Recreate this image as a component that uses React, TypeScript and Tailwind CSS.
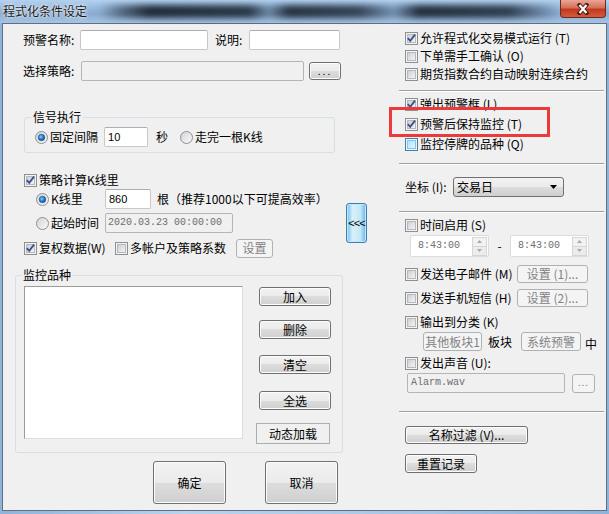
import React from "react";

const btn =
  "flex items-center justify-center whitespace-nowrap rounded-[3px] border border-[#707070] bg-[linear-gradient(#f2f2f2_0%,#ebebeb_50%,#dddddd_50%,#cfcfcf_100%)] shadow-[inset_0_0_0_1px_#fcfcfc]";
const btnOff =
  "flex items-center justify-center whitespace-nowrap rounded-[3px] border border-[#adb2b5] bg-[#f4f4f4] text-[#838383]";
const field = "flex items-center rounded-[2px] border border-[#c6c8cc] border-t-[#abadb3] bg-white";
const fieldOff = "flex items-center rounded-[2px] border border-[#b5b5b5] bg-[#f0f0f0] text-[#6d6d6d]";
const mono = "font-['Liberation_Mono',monospace] text-[10px]";
const sep = "h-0 border-y border-t-[#a0a0a0] border-b-[#ffffff]";

function Check({ on, hot }: { on?: boolean; hot?: boolean }) {
  return (
    <svg width="13" height="13" viewBox="0 0 13 13" className="shrink-0">
      <defs>
        <linearGradient id="cbg" x1="0" y1="0" x2="1" y2="1">
          <stop offset="0" stopColor="#c9cdd3" />
          <stop offset="1" stopColor="#f6f6f6" />
        </linearGradient>
        <linearGradient id="cbh" x1="0" y1="0" x2="1" y2="1">
          <stop offset="0" stopColor="#b1dffd" />
          <stop offset="1" stopColor="#eaf7fe" />
        </linearGradient>
      </defs>
      <rect x="0.5" y="0.5" width="12" height="12" fill="#f4f4f4" stroke={hot ? "#3c7fb1" : "#8e8f8f"} />
      <rect
        x="2.5"
        y="2.5"
        width="8"
        height="8"
        fill={hot ? "url(#cbh)" : "url(#cbg)"}
        stroke={hot ? "#79c6f9" : "#b5b9bf"}
      />
      {on && <path d="M2.8 6.2 L5.2 8.8 L10 2.6" fill="none" stroke="#3d4f8a" strokeWidth="1.8" />}
    </svg>
  );
}

function Radio({ on }: { on?: boolean }) {
  return (
    <svg width="13" height="13" viewBox="0 0 13 13" className="shrink-0">
      <defs>
        <linearGradient id="rbg" x1="0" y1="0" x2="1" y2="1">
          <stop offset="0" stopColor="#d0d4d9" />
          <stop offset="1" stopColor="#fafafa" />
        </linearGradient>
        <radialGradient id="rdot" cx="0.4" cy="0.4" r="0.6">
          <stop offset="0" stopColor="#8fd0f6" />
          <stop offset="0.55" stopColor="#2a7fcf" />
          <stop offset="1" stopColor="#0f4f9a" />
        </radialGradient>
      </defs>
      <circle cx="6.5" cy="6.5" r="6" fill="url(#rbg)" stroke="#8e8f8f" />
      {on && <circle cx="6.5" cy="6.5" r="3.3" fill="url(#rdot)" stroke="#1c5a96" strokeWidth="0.6" />}
    </svg>
  );
}

function Spin() {
  return (
    <div className="flex h-[22px] w-[79px] items-center rounded-[2px] border border-[#dcdcdc] bg-white">
      <span className={"ml-[7px] flex-1 text-[#6d6d6d] " + mono}>8:43:00</span>
      <div className="mr-[1px] flex h-[19px] w-[15px] flex-col">
        <div className="flex flex-1 items-center justify-center border border-[#d6d6d6] bg-[#f2f2f2]">
          <svg width="5" height="3" viewBox="0 0 5 3">
            <path d="M0 3 L2.5 0 L5 3 Z" fill="#a8a8a8" />
          </svg>
        </div>
        <div className="flex flex-1 items-center justify-center border border-t-0 border-[#d6d6d6] bg-[#ececec]">
          <svg width="5" height="3" viewBox="0 0 5 3">
            <path d="M0 0 L2.5 3 L5 0 Z" fill="#a8a8a8" />
          </svg>
        </div>
      </div>
    </div>
  );
}

export default function App() {
  return (
    <div className="flex h-[514px] w-[609px] flex-col overflow-hidden bg-[linear-gradient(90deg,#8fb3d9,#b9d3ec_30%,#a7c5e4_70%,#8fb3d9)] pb-[3px] font-['Noto_Sans_CJK_SC',sans-serif] text-[12px] leading-[14px] text-black">
      {/* title bar */}
      <div className="flex h-[23px] shrink-0 items-start bg-[linear-gradient(#b4d2ef,#93b6da_40%,#8aabcf_60%,#a6c5e4)]">
        <span className="ml-[3px] mt-[4px] whitespace-nowrap text-[#1a1a1a] [text-shadow:0_0_5px_#fff,0_0_2px_#fff]">
          程式化条件设定
        </span>
        <div className="ml-[12px] mt-[5px] h-[13px] flex-1 bg-[linear-gradient(90deg,transparent_0px,rgba(40,52,66,.5)_20px,rgba(20,28,38,.9)_50px,rgba(24,34,46,.85)_150px,rgba(70,90,112,.45)_170px,rgba(20,28,38,.85)_190px,rgba(30,40,54,.8)_260px,rgba(70,92,116,.35)_295px,rgba(20,28,38,.88)_320px,rgba(24,34,46,.8)_410px,rgba(60,80,104,.5)_440px,transparent_462px)] blur-[3px]" />
        <div className="mr-[3px] flex h-[18px] w-[46px] items-center justify-center rounded-b-[4px] border border-t-0 border-[#6e2a22] bg-[linear-gradient(#eaa597,#d5705a_45%,#c1391c_55%,#d55b3e)]">
          <svg width="14" height="12" viewBox="0 0 14 12">
            <path d="M3.5 2 L10.5 10 M10.5 2 L3.5 10" stroke="#4a1810" strokeWidth="4" strokeLinecap="square" />
            <path d="M3.5 2 L10.5 10 M10.5 2 L3.5 10" stroke="#ffffff" strokeWidth="2.2" />
          </svg>
        </div>
      </div>

      {/* client area */}
      <div className="mx-[2px] flex flex-1 border border-[#5e6f86] bg-[#f0f0f0]">
        {/* left column */}
        <div className="flex w-[343px] shrink-0 flex-col">
          <div className="mt-[6px] flex h-[20px] items-center pl-[20px]">
            <span className="w-[57px] whitespace-nowrap">预警名称:</span>
            <div className={"h-[20px] w-[128px] " + field} />
            <span className="ml-[7px] w-[34px] whitespace-nowrap">说明:</span>
            <div className={"h-[20px] w-[91px] " + field} />
          </div>
          <div className="mt-[11px] flex h-[20px] items-center pl-[20px]">
            <span className="w-[58px] whitespace-nowrap">选择策略:</span>
            <div className={"h-[20px] w-[223px] " + fieldOff} />
            <div className={"ml-[5px] h-[18px] w-[32px] text-[10px] tracking-[2px] " + btn}>...</div>
          </div>

          <fieldset className="ml-[21px] mt-[29px] w-[311px] rounded-[3px] border border-[#d5dfe5]">
            <legend className="ml-[6px] px-[2px] leading-[14px]">信号执行</legend>
            <div className="mb-[5px] mt-[3px] flex h-[20px] items-center pl-[10px]">
              <Radio on />
              <span className="ml-[2px] whitespace-nowrap">固定间隔</span>
              <div className={"ml-[6px] h-[20px] w-[44px] pl-[3px] " + field}>
                <span className="font-['Liberation_Sans',sans-serif] text-[11px]">10</span>
              </div>
              <span className="ml-[8px]">秒</span>
              <span className="ml-[12px]">
                <Radio />
              </span>
              <span className="ml-[2px] whitespace-nowrap">走完一根K线</span>
            </div>
          </fieldset>

          <div className="mt-[19px] flex h-[16px] items-center pl-[21px]">
            <Check on />
            <span className="ml-[2px] whitespace-nowrap">策略计算K线里</span>
          </div>
          <div className="mt-[1px] flex h-[20px] items-center pl-[33px]">
            <Radio on />
            <span className="ml-[2px] w-[54px] whitespace-nowrap">K线里</span>
            <div className={"h-[20px] w-[46px] pl-[3px] " + field}>
              <span className="font-['Liberation_Sans',sans-serif] text-[11px]">860</span>
            </div>
            <span className="ml-[6px] whitespace-nowrap">根（推荐1000以下可提高效率）</span>
          </div>
          <div className="mt-[4px] flex h-[20px] items-center pl-[33px]">
            <Radio />
            <span className="ml-[2px] w-[54px] whitespace-nowrap">起始时间</span>
            <div className={"h-[20px] w-[128px] pl-[2px] " + fieldOff}>
              <span className={mono}>2020.03.23 00:00:00</span>
            </div>
          </div>
          <div className="mt-[6px] flex h-[18px] items-center pl-[21px]">
            <Check on />
            <span className="ml-[2px] w-[76px] whitespace-nowrap">复权数据(W)</span>
            <Check />
            <span className="ml-[2px] w-[104px] whitespace-nowrap">多帐户及策略系数</span>
            <div className={"ml-[2px] h-[19px] w-[37px] " + btnOff}>设置</div>
          </div>

          <fieldset className="ml-[12px] mt-[11px] w-[328px] rounded-[3px] border border-[#d5dfe5]">
            <legend className="ml-[6px] px-[1px] leading-[14px]">监控品种</legend>
            <div className="mt-[4px] flex pb-[8px] pl-[8px]">
              <div className="h-[153px] w-[219px] border border-[#9c9c9c] border-r-[#dcdcdc] border-b-[#dcdcdc] bg-white" />
              <div className="ml-[13px] flex flex-col">
                <div className={"ml-[3px] mt-[1px] h-[19px] w-[72px] " + btn}>加入</div>
                <div className={"ml-[3px] mt-[14px] h-[19px] w-[72px] " + btn}>删除</div>
                <div className={"ml-[3px] mt-[16px] h-[19px] w-[72px] " + btn}>清空</div>
                <div className={"ml-[3px] mt-[17px] h-[19px] w-[72px] " + btn}>全选</div>
                <div className="mt-[13px] flex h-[21px] w-[74px] items-center justify-center border border-[#adadad] bg-[#f0f0f0]">
                  动态加载
                </div>
              </div>
            </div>
          </fieldset>

          <div className="mt-[8px] flex pl-[150px]">
            <div className={"h-[43px] w-[73px] " + btn}>确定</div>
            <div className={"ml-[39px] h-[43px] w-[73px] " + btn}>取消</div>
          </div>
        </div>

        {/* middle */}
        <div className="w-[21px] shrink-0">
          <div className="mt-[179px] flex h-[40px] w-[21px] items-center justify-center rounded-[3px] border border-[#3c7fb1] bg-[linear-gradient(90deg,#6ec1ee,#d9f1fc_30%,#c4e7f8_70%,#63b6e6)] font-['Liberation_Sans',sans-serif] text-[11px] tracking-[-1px] shadow-[inset_0_0_0_1px_#bfe6fb]">
            &lt;&lt;&lt;
          </div>
        </div>

        {/* right column */}
        <div className="relative flex flex-1 flex-col pl-[32px] pr-[2px]">
          <div className="mt-[5px] flex h-[18px] items-center pl-[6px]">
            <Check on />
            <span className="ml-[2px] whitespace-nowrap">允许程式化交易模式运行 (T)</span>
          </div>
          <div className="flex h-[18px] items-center pl-[6px]">
            <Check />
            <span className="ml-[2px] whitespace-nowrap">下单需手工确认 (O)</span>
          </div>
          <div className="flex h-[18px] items-center pl-[6px]">
            <Check />
            <span className="ml-[2px] whitespace-nowrap">期货指数合约自动映射连续合约</span>
          </div>
          <div className={"mt-[7px] " + sep} />
          <div className="mt-[3px] flex h-[18px] items-center pl-[6px]">
            <Check on />
            <span className="ml-[2px] whitespace-nowrap">弹出预警框 (L)</span>
          </div>
          <div className="mt-[2px] flex h-[18px] items-center pl-[6px]">
            <Check on />
            <span className="ml-[2px] whitespace-nowrap">预警后保持监控 (T)</span>
          </div>
          <div className="mt-[2px] flex h-[18px] items-center pl-[6px]">
            <Check hot />
            <span className="ml-[2px] whitespace-nowrap">监控停牌的品种 (Q)</span>
          </div>
          <div className={"mt-[10px] " + sep} />
          <div className="mt-[12px] flex h-[20px] items-center pl-[6px]">
            <span className="w-[48px] whitespace-nowrap">坐标 (I):</span>
            <div className="flex h-[20px] w-[111px] items-center rounded-[3px] border border-[#707070] bg-[linear-gradient(#f2f2f2_0%,#ebebeb_50%,#dddddd_50%,#cfcfcf_100%)] pl-[3px] pr-[6px]">
              <span className="flex-1">交易日</span>
              <svg width="7" height="4" viewBox="0 0 7 4">
                <path d="M0 0 L7 0 L3.5 4 Z" fill="#000" />
              </svg>
            </div>
          </div>
          <div className={"mt-[14px] " + sep} />
          <div className="mt-[3px] flex h-[18px] items-center pl-[6px]">
            <Check />
            <span className="ml-[2px] whitespace-nowrap">时间启用 (S)</span>
          </div>
          <div className="mt-[1px] flex h-[22px] items-center pl-[11px]">
            <Spin />
            <span className="w-[21px] text-center">-</span>
            <Spin />
          </div>
          <div className="mt-[8px] flex h-[18px] items-center pl-[6px]">
            <Check />
            <span className="ml-[2px] w-[95px] whitespace-nowrap">发送电子邮件 (M)</span>
            <div className={"ml-[2px] h-[18px] w-[71px] " + btnOff}>设置 (1)...</div>
          </div>
          <div className="mt-[6px] flex h-[18px] items-center pl-[6px]">
            <Check />
            <span className="ml-[2px] w-[95px] whitespace-nowrap">发送手机短信 (H)</span>
            <div className={"ml-[2px] h-[18px] w-[71px] " + btnOff}>设置 (2)...</div>
          </div>
          <div className="mt-[6px] flex h-[18px] items-center pl-[6px]">
            <Check />
            <span className="ml-[2px] whitespace-nowrap">输出到分类 (K)</span>
          </div>
          <div className="mt-[1px] flex h-[19px] items-center pl-[24px]">
            <div className={"h-[19px] w-[59px] text-[#6d6d6d] " + btnOff}>其他板块1</div>
            <span className="ml-[6px] w-[24px] whitespace-nowrap">板块</span>
            <div className={"ml-[9px] h-[19px] w-[60px] text-[#6d6d6d] " + btnOff}>系统预警</div>
            <span className="ml-[4px] mt-[4px]">中</span>
          </div>
          <div className="mt-[4px] flex h-[16px] items-center pl-[6px]">
            <Check />
            <span className="ml-[2px] whitespace-nowrap">发出声音 (U):</span>
          </div>
          <div className="mt-[2px] flex h-[20px] items-center pl-[8px]">
            <div className={"h-[20px] w-[158px] pl-[3px] " + fieldOff}>
              <span className={mono}>Alarm.wav</span>
            </div>
            <div className={"ml-[7px] h-[19px] w-[23px] text-[9px] tracking-[1px] " + btnOff}>...</div>
          </div>
          <div className={"mt-[18px] " + sep} />
          <div className={"ml-[6px] mt-[13px] h-[18px] w-[123px] " + btn}>名称过滤 (V)...</div>
          <div className={"ml-[6px] mt-[10px] h-[19px] w-[72px] " + btn}>重置记录</div>

          {/* red annotation box */}
          <div className="absolute left-[22px] top-[83px] h-[30px] w-[161px] border-[3px] border-[#ec3a3a]" />
        </div>
      </div>
    </div>
  );
}
